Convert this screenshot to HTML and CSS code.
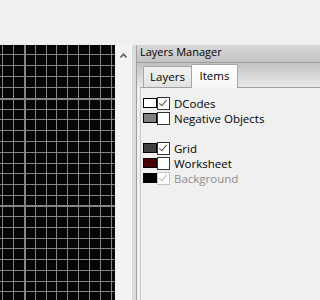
FILE: index.html
```html
<!DOCTYPE html>
<html lang="en">
<head>
  <meta charset="UTF-8">
  <title>Layers Manager</title>
  <link rel="stylesheet" href="styles.css">
</head>
<body>
  <div class="top"></div>
  <div class="main">
    <div class="canvas">
      <svg width="115" height="255" viewBox="0 0 115 255">
        <rect width="115" height="255" fill="#050505"/>
        <path stroke="#848484" stroke-width="1" fill="none" shape-rendering="crispEdges"
          d="M2.5 0V255M13.5 0V255M35.5 0V255M46.5 0V255M56.5 0V255M67.5 0V255M78.5 0V255M89.5 0V255M100.5 0V255M111.5 0V255
             M0 9.5H115M0 20.5H115M0 31.5H115M0 42.5H115M0 64.5H115M0 74.5H115M0 85.5H115M0 96.5H115M0 107.5H115M0 118.5H115M0 128.5H115M0 139.5H115M0 150.5H115M0 171.5H115M0 182.5H115M0 193.5H115M0 203.5H115M0 214.5H115M0 225.5H115M0 236.5H115M0 246.5H115"/>
        <path stroke="#848484" stroke-width="2" fill="none" shape-rendering="crispEdges"
          d="M25 0V255M0 54H115M0 161H115"/>
      </svg>
    </div>
    <div class="vscroll">
      <svg class="arrow-up" width="7" height="5" viewBox="0 0 7 5">
        <path d="M0.5 4.5L3.5 1.2L6.5 4.5" stroke="#606060" stroke-width="1.6" fill="none"/>
      </svg>
    </div>
    <div class="splitter"></div>
    <div class="panel">
      <div class="panel-title">Layers Manager</div>
      <div class="tabstrip">
        <div class="tab">Layers</div>
        <div class="tab active">Items</div>
      </div>
      <div class="tabpage">
        <div class="item">
          <span class="swatch" style="background:#ffffff"></span>
          <span class="check checked"></span>
          <span class="label">DCodes</span>
        </div>
        <div class="item">
          <span class="swatch" style="background:#808080"></span>
          <span class="check"></span>
          <span class="label">Negative Objects</span>
        </div>
        <div class="item gap">
          <span class="swatch" style="background:#404040"></span>
          <span class="check checked"></span>
          <span class="label">Grid</span>
        </div>
        <div class="item">
          <span class="swatch" style="background:#480000"></span>
          <span class="check"></span>
          <span class="label">Worksheet</span>
        </div>
        <div class="item disabled">
          <span class="swatch" style="background:#000000"></span>
          <span class="check checked"></span>
          <span class="label">Background</span>
        </div>
      </div>
    </div>
  </div>
</body>
</html>
```

FILE: styles.css
```css
body {
  margin: 0;
  width: 320px;
  height: 300px;
  overflow: hidden;
  background-color: #f0f0f0;
  font-family: "Open Sans", "Liberation Sans", sans-serif;
  font-size: 11.5px;
  color: #000;
}
.top {
  height: 45px;
}
.main {
  display: flex;
  height: 255px;
}
.canvas {
  width: 115px;
  height: 255px;
}
.canvas svg {
  display: block;
}
.vscroll {
  width: 16px;
  background-color: #f3f3f3;
  border-right: 1px solid #ffffff;
  display: flex;
  justify-content: center;
}
.arrow-up {
  margin-top: 8px;
}
.splitter {
  width: 4px;
  background-color: #dcdcdc;
  border-right: 1px solid #a0a0a0;
}
.panel {
  flex: 1;
  display: flex;
  flex-direction: column;
}
.panel-title {
  height: 17px;
  line-height: 13px;
  font-size: 11px;
  padding-left: 3px;
  background: linear-gradient(#d8d8d8, #c3c3c3);
  border-bottom: 1px solid #9c9c9c;
}
.tabstrip {
  height: 24px;
  display: flex;
  align-items: flex-end;
  padding-left: 6px;
  background: linear-gradient(#c2c2c2, #e9e9e9);
}
.tab {
  height: 20px;
  line-height: 20px;
  width: 47px;
  text-align: center;
  border: 1px solid #a5a5a5;
  border-bottom: none;
  border-radius: 2px 2px 0 0;
  background: linear-gradient(#f2f2f2, #e3e3e3);
}
.tab.active {
  height: 23px;
  line-height: 22px;
  width: 45px;
  margin-left: -1px;
  margin-bottom: -1px;
  position: relative;
  background: linear-gradient(#ffffff, #f6f6f6);
}
.tabpage {
  flex: 1;
  margin-left: 3px;
  padding: 8px 0 0 2px;
  border-top: 1px solid #a0a0a0;
  border-left: 1px solid #c8c8c8;
}
.item {
  height: 15px;
  display: flex;
  align-items: center;
}
.item.gap {
  margin-top: 15px;
}
.swatch {
  width: 12px;
  height: 8px;
  border: 1px solid #000;
  margin-top: -1px;
}
.check {
  width: 11px;
  height: 11px;
  border: 1px solid #333;
  background-color: #fff;
  position: relative;
}
.check.checked::after {
  content: "";
  position: absolute;
  left: 3px;
  top: 0px;
  width: 3px;
  height: 7px;
  border: solid #505050;
  border-width: 0 1px 1px 0;
  transform: rotate(40deg);
}
.label {
  margin-left: 4px;
}
.disabled .check {
  border-color: #c4c4c4;
}
.disabled .check.checked::after {
  border-color: #b8b8b8;
}
.disabled .label {
  color: #8d8d8d;
}
```
